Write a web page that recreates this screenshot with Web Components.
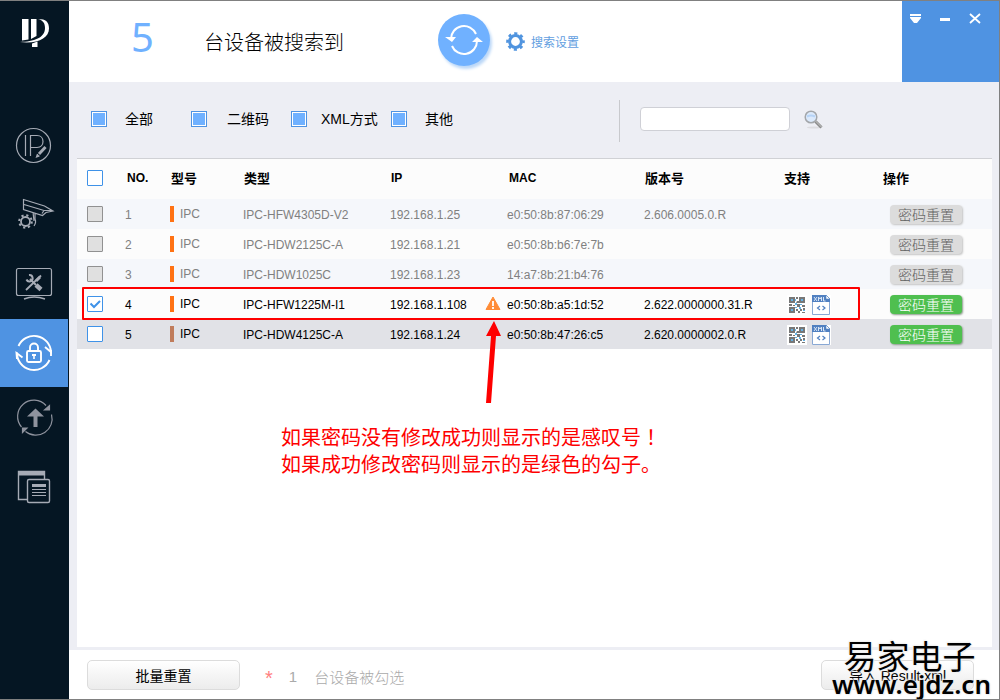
<!DOCTYPE html>
<html lang="zh-CN">
<head>
<meta charset="utf-8">
<meta name="viewport" content="width=device-width, initial-scale=1">
<title>ConfigTool</title>
<style>
  html, body { margin: 0; }
  body { font-family: "Liberation Sans", "Noto Sans CJK SC", sans-serif; font-size: 12px; color: #000; }
</style>
</head>
<body>
<config-tool></config-tool>

<script>
const define = (name, html, setup) => {
  const tpl = document.createElement('template');
  tpl.innerHTML = '<style>:host,*{box-sizing:border-box}:host([hidden]){display:none}</style>' + html;
  customElements.define(name, class extends HTMLElement {
    constructor() {
      super();
      this.attachShadow({ mode: 'open' });
    }
    connectedCallback() {
      if (this.shadowRoot.childNodes.length) return;
      this.shadowRoot.append(tpl.content.cloneNode(true));
      if (setup) setup(this, this.shadowRoot);
    }
  });
};

/* ---------- sidebar ---------- */
define('nav-item', `
<style>
  :host { display: block; margin-right: 1px; }
  a { display: block; height: 68px; color: #a6abb5; }
  :host([active]) a { background: #4f93e2; color: #fff; }
</style>
<a href="#"><slot></slot></a>`,
(host, root) => root.querySelector('a').setAttribute('aria-label', host.getAttribute('label')));

define('side-bar', `
<style>
  :host { display: block; background: #051623; }
  .logo { display: block; height: 114px; }
  svg { display: block; width: 68px; height: 68px; fill: none; stroke: currentColor; stroke-width: 1.2; }
</style>
<div class="logo">
  <svg viewBox="0 0 68 68" style="color:#fff">
    <g fill="#fff" stroke="none">
      <path d="M22 18h6.500v20.500l-6.500 1zM31 18h5.500v17l-5.500 3zM32 42.500l5.500-2V46H32z"/>
      <path d="M38 18c8 0 11 3 11 9.500C49 37 38 43 20 41c14-.5 25-4 25-14 0-5-2-7.500-7-9z"/>
    </g>
  </svg>
</div>
<nav>
  <nav-item label="修改IP"><svg viewBox="0 0 68 68">
    <circle cx="33.500" cy="30.500" r="17"/>
    <path d="M25.500 20v21M30.500 41V20.500h6.500c8 0 8 12 0 12h-6.500"/>
    <path d="M45.500 32l-6.500 7" stroke-width="3"/><path d="M37.500 39l-1 3 3-1" fill="currentColor"/>
  </svg></nav-item>
  <nav-item label="系统设置"><svg viewBox="0 0 68 68">
    <path d="M23.500 16.500l21 6.500 8.500 5-7 1.500-3.500 3-19-6zM24 21.500l20 6 8.500 0M44 27.500l-2 3M33 29l1 9M35 30v6c1 2 1 4-1 7"/>
    <circle cx="25.500" cy="38.500" r="4.500" stroke-width="1.800"/>
    <circle cx="25.500" cy="38.500" r="6.300" stroke-width="2" stroke-dasharray="2.200 2.750"/>
  </svg></nav-item>
  <nav-item label="系统维护"><svg viewBox="0 0 68 68">
    <rect x="16.500" y="17.500" width="35" height="27" rx="2"/>
    <path d="M24 48q10-4 21 0" stroke-width="1.500"/>
    <path d="M26 39L41 24.500" stroke-width="1.800"/>
    <path d="M36 34l5 4.500" stroke-width="4.500"/><path d="M30 28l6 6" stroke-width="2"/>
    <path d="M29 24a3.200 3.200 0 1 1-2.500 4.500" stroke-width="2"/><path d="M36 30l4-4" stroke-width="3"/>
  </svg></nav-item>
  <nav-item label="密码重置" active><svg viewBox="0 0 68 68">
    <g stroke-width="1.900"><path d="M18.500 27A17 17 0 0 1 51 33l-6-5M17 40l-.5-6 6 4.500"/>
    <path d="M17 33.500A17 17 0 0 0 49.500 41M51 31v6"/>
    <rect x="27" y="32" width="14" height="11" rx="1.500"/><path d="M30 32v-3.500a4 4 0 0 1 8 0V32"/></g>
    <path d="M32 35h4v2h-1.200v3h-1.600v-3H32z" fill="#fff" stroke="none"/>
  </svg></nav-item>
  <nav-item label="设备升级"><svg viewBox="0 0 68 68" style="color:#8f939e">
    <path d="M46 18.500A16.300 16.300 0 0 0 21.500 40M51.500 27.500a16.300 16.300 0 0 1-26 17"/>
    <path d="M49.500 18.500v4.500h-5zM22.500 45.500V41h4.500z" fill="currentColor"/>
    <path d="M35.500 21.500l8.500 8h-6.500V40h-4V29.500H27z" fill="currentColor" stroke="none"/>
  </svg></nav-item>
  <nav-item label="文档"><svg viewBox="0 0 68 68">
    <path d="M27 44.500h-8.500v-28h26V24" stroke-width="1.400"/><path d="M18 16h27v4.500H18z" fill="currentColor" stroke="none"/>
    <rect x="27.500" y="24.500" width="22" height="23" rx="1.500" stroke-width="1.400"/>
    <path d="M32 30.500h14" stroke-width="3"/><path d="M32 34.500h14M32 37.500h14M32 40.500h14" />
  </svg></nav-item>
</nav>`);

/* ---------- header ---------- */
define('top-bar', `
<style>
  :host { display: flex; align-items: center; height: 81px; background: #fff; }
  .count { width: 70px; height: 81px; margin-left: 62px; font: 40px/72px "Noto Sans", sans-serif; color: #70b1ff; }
  h1 { flex: 1 1 228px; max-width: 228px; margin: 2px 0 0 3px; font-size: 20px; line-height: 30px; font-weight: 300; white-space: nowrap; }
  button { padding: 0; border: 0; background: none; color: inherit; font: inherit; cursor: pointer; }
  .refresh { width: 52px; height: 52px; margin: 0 16px 3px 6px; border-radius: 50%; background: #70b1ff; box-shadow: 2px 3px 3px #bcd8f8; }
  .settings { display: flex; align-items: center; gap: 6px; color: #629edf; white-space: nowrap; }
  svg { display: block; }
  .window { display: flex; align-items: flex-start; gap: 9px; width: 97px; height: 81px; margin-left: auto; padding: 8px 3px; background: #4f93e2; }
  .window button { width: 21px; height: 20px; color: #fff; }
</style>
<div class="count">5</div>
<h1>台设备被搜索到</h1>
<button class="refresh" aria-label="刷新"><svg width="52" height="52" viewBox="0 0 52 52" fill="none" stroke="#fff" stroke-width="2">
  <path d="M38 20A13 13 0 0 0 13 25M14 32A13 13 0 0 0 39 27"/>
  <path d="M7 23h11l-4 5zM34 28h11l-6-5z" fill="#fff" stroke="none"/></svg></button>
<button class="settings"><svg width="19" height="19" viewBox="0 0 19 19" fill="none" stroke="#5094df">
  <circle cx="9.500" cy="9.500" r="5.900" stroke-width="3"/><circle cx="9.500" cy="9.500" r="8" stroke-width="2.600" stroke-dasharray="3.100 3.180" stroke-dashoffset="1.500"/></svg>搜索设置</button>
<div class="window">
  <button aria-label="菜单"><svg width="21" height="20" fill="#fff"><path d="M5 5h11v2H5zM5 8h11v1l-4 5H9L5 9z"/></svg></button>
  <button aria-label="最小化"><svg width="21" height="20" fill="#fff"><path d="M5 9h10v3H5z"/></svg></button>
  <button aria-label="关闭"><svg width="21" height="20" stroke="#fff" stroke-width="1.800"><path d="M5 5l10 9M15 5L5 14"/></svg></button>
</div>`);

/* ---------- filters ---------- */
define('filter-box', `
<style>
  :host { display: block; width: 100px; font-size: 14px; }
  label { display: flex; align-items: center; gap: var(--gap, 18px); line-height: 20px; white-space: nowrap; }
  input { appearance: none; flex: none; width: 16px; height: 16px; margin: 0; border: 1px solid #4f93e2; background: #fff; }
  input:checked { padding: 1px; background: #70b1ff content-box; box-shadow: inset 0 0 0 1px #fff; }
</style>
<label><input type="checkbox" checked><slot></slot></label>`);

define('filter-bar', `
<style>
  :host { display: flex; align-items: center; height: 76px; padding-left: 22px; }
  filter-box { margin-bottom: 2px; }
  .line { width: 1px; height: 42px; margin: 2px 20px 0 128px; background: #c8c9cd; }
  input { width: 150px; height: 24px; margin-bottom: 2px; padding: 0 6px; border: 1px solid #cfd0d6; border-radius: 4px; background: #fff; font: inherit; }
  button { margin-left: 14px; padding: 0; border: 0; background: none; }
  svg { display: block; }
</style>
<filter-box style="--gap:18px">全部</filter-box>
<filter-box style="--gap:20px">二维码</filter-box>
<filter-box style="--gap:14px">XML方式</filter-box>
<filter-box style="--gap:18px">其他</filter-box>
<div class="line"></div>
<input type="search" aria-label="搜索">
<button aria-label="搜索"><svg width="20" height="20" viewBox="0 0 20 20" fill="none">
  <ellipse cx="10" cy="17.500" rx="7" ry="1" fill="#dcdce0"/>
  <path d="M11.500 11.500l6 6" stroke="#8c8c8c" stroke-width="3"/><path d="M11.500 11l6 6" stroke="#c9c9c9"/>
  <circle cx="7" cy="7" r="5.800" fill="#dbe9fb" stroke="#a3a6aa" stroke-width="1.500"/>
  <path d="M3 6.500q4-2 8 0" stroke="#b6d3f6" stroke-width="2"/></svg></button>`);

/* ---------- small icons ---------- */
define('warn-icon', `
<style>:host { display: block; width: 16px; height: 15px; } svg { display: block; }</style>
<svg width="16" height="15" viewBox="0 0 16 15"><path d="M8 1L15 13.500H1z" fill="#ff8c37" stroke="#ff8c37" stroke-linejoin="round"/><path d="M8 5v5M8 11v2" stroke="#fff" stroke-width="1.800"/></svg>`);

define('qr-icon', `
<style>:host { display: block; width: 20px; height: 20px; background: #fff; } svg { display: block; }</style>
<svg width="20" height="20" viewBox="0 0 20 20"><g fill="none" stroke="#777" stroke-width="2"><path d="M3 3h4v4H3zM13 3h4v4h-4zM3 13h4v4H3z"/></g>
<path d="M9 2h2v2H9zM10 6h2v2H9zM2 9h3v2H2zM6 10h2v1H6zM10 9h3v3h-3zM15 10h3v2h-3zM9 14h2v2H9zM13 14h2v2h-2zM16 13h2v2h-2zM11 16h2v2h-2zM15 17h3v1h-3z" fill="#777"/>
<path d="M4 4h2v2H4zM8 4h1v2H8zM14 4h2v2h-2zM4 14h2v2H4zM8 8h2v2H8zM13 9h2v1h-2zM8 12h2v1H8zM12 12h2v2h-2zM16 15h2v1h-2z" fill="#63b4e8"/></svg>`);

define('xml-icon', `
<style>:host { display: block; width: 19px; height: 20px; background: #fff; } svg { display: block; }</style>
<svg width="19" height="20" viewBox="0 0 19 20"><path d="M.5.5h14l3 3v16H.5z" fill="#fff" stroke="#89a8d4"/><path d="M0 0h14l4 4v3H0z" fill="#5080c1"/><path d="M14 0l4 4h-4z" fill="#fff" stroke="#5080c1" stroke-width=".6"/>
<path d="M2 2l3 4M5 2L2 6M6.500 6V2l1.500 2 1.500-2v4M11.500 2v4h2" stroke="#d9e5f5" fill="none"/><path d="M8 11l-2.500 2L8 15M10.500 11l2.500 2-2.500 2" stroke="#5080c1" fill="none" stroke-width="1.200"/></svg>`);

/* ---------- device table ---------- */
const devices = [
  ['IPC-HFW4305D-V2', '192.168.1.25', 'e0:50:8b:87:06:29', '2.606.0005.0.R', 'off'],
  ['IPC-HDW2125C-A', '192.168.1.21', 'e0:50:8b:b6:7e:7b', '', 'off'],
  ['IPC-HDW1025C', '192.168.1.23', '14:a7:8b:21:b4:76', '', 'off'],
  ['IPC-HFW1225M-I1', '192.168.1.108', 'e0:50:8b:a5:1d:52', '2.622.0000000.31.R', 'checked'],
  ['IPC-HDW4125C-A', '192.168.1.24', 'e0:50:8b:47:26:c5', '2.620.0000002.0.R', 'hover']
];

define('device-table', `
<style>
  :host { display: block; }
  table { width: 100%; border-collapse: collapse; table-layout: fixed; border-top: 1px solid #d0d1d5; }
  th, td { padding: 0 0 0 8px; text-align: left; white-space: nowrap; }
  th { height: 40px; padding: 0 0 2px 9px; font-size: 13px; background: #fcfcfc; }
  th.latin { font-size: 12px; }
  th.no { padding-left: 10px; }
  th.mac { padding-left: 32px; }
  td { height: 30px; padding-top: 2px; }
  tr.off { color: #808080; }
  tbody tr { background: #fcfcfc; }
  tbody tr:nth-child(odd) { background: #f5f7fb; }
  tbody tr.hover { background: #e1e2e7; }
  th.pick, td.pick { padding-left: 10px; }
  td.pick, td.kind-cell { padding-top: 0; }
  input { appearance: none; display: block; width: 16px; height: 16px; margin: 0; border: 1px solid #3f92e8; border-radius: 1px; background: #fff; }
  input:disabled { border-color: #919191; background: #e0e0e0; }
  svg.tick { position: absolute; inset: 0; pointer-events: none; }
  .box { position: relative; width: 16px; }
  .kind { display: flex; align-items: center; gap: 6px; line-height: 18px; }
  .kind::before { content: ""; width: 4px; height: 16px; background: #ff7214; }
  .hover .kind::before { background: #c07c5c; }
  div.mac { display: flex; align-items: center; }
  .slot { width: 22px; height: 15px; }
  warn-icon { margin-top: -1px; }
  .support { display: flex; gap: 5px; padding-left: 4px; }
  td.op { padding-left: 16px; }
  button { display: block; width: 72px; height: 19px; padding: 0; border: 0; border-radius: 4px; background: #4fbf4f; color: #fff; font: 300 14px/19px "Noto Sans CJK SC", sans-serif; box-shadow: 1px 1px 2px #8a9a8a; }
  button:disabled { background: #dcdcdc; color: #606060; box-shadow: 1px 1px 2px #c4c4c4; }
</style>
<table>
  <colgroup><col style="width:40px"><col style="width:45px"><col style="width:73px"><col style="width:147px"><col style="width:95px"><col style="width:159px"><col style="width:139px"><col style="width:99px"><col style="width:118px"></colgroup>
  <thead><tr><th class="pick"><input type="checkbox" aria-label="全选"></th><th class="latin no">NO.</th><th>型号</th><th>类型</th><th class="latin">IP</th><th class="latin mac">MAC</th><th>版本号</th><th>支持</th><th>操作</th></tr></thead>
  <tbody></tbody>
</table>`,
(host, root) => {
  root.querySelector('tbody').innerHTML = devices.map(([type, ip, mac, version, state], i) => {
    const off = state === 'off' ? 'disabled' : '';
    const checked = state === 'checked';
    return `<tr class="${state}">
      <td class="pick"><div class="box"><input type="checkbox" aria-label="选择 ${i + 1}" ${off} ${checked ? 'checked' : ''}>
      ${checked ? '<svg class="tick" width="16" height="16" fill="none" stroke="#3f92e8" stroke-width="2"><path d="M3.500 7.500l3.500 3.500 6-6"/></svg>' : ''}</div></td>
      <td>${i + 1}</td><td class="kind-cell"><div class="kind">IPC</div></td><td>${type}</td><td>${ip}</td>
      <td><div class="mac"><span class="slot">${checked ? '<warn-icon></warn-icon>' : ''}</span>${mac}</div></td>
      <td>${version}</td>
      <td>${off ? '' : '<div class="support"><qr-icon></qr-icon><xml-icon></xml-icon></div>'}</td>
      <td class="op"><button ${off}>密码重置</button></td></tr>`;
  }).join('');
});

/* ---------- annotation laid over the table ---------- */
define('red-note', `
<style>
  :host { position: absolute; left: 5px; right: 132px; top: 129px; color: #fe0000; pointer-events: none; }
  .frame { height: 33px; border: 2px solid #fe0000; border-radius: 1px; }
  svg { display: block; margin: 1px 0 0 398px; }
  p { margin: 20px 0 0 199px; font: 20px/27px "Noto Sans CJK SC", sans-serif; white-space: nowrap; }
  .mark { font-family: "Noto Sans CJK TC"; }
</style>
<div class="frame"></div>
<svg width="24" height="82" viewBox="0 0 24 82" fill="#fe0000"><path d="M14 0l7 15h-5L11 82H6l5-67H6z"/></svg>
<p>如果密码没有修改成功则显示的是感叹号<span class="mark" lang="zh-TW">！</span><br>如果成功修改密码则显示的是绿色的勾子。</p>`);

/* ---------- footer ---------- */
define('plain-button', `
<style>
  :host { display: block; }
  button { display: block; width: 153px; height: 30px; padding: 0; border: 1px solid #dcdcdc; border-radius: 5px; background: linear-gradient(#fff, #ececec); color: #000; font: 14px "Liberation Sans", "Noto Sans CJK SC", sans-serif; }
</style>
<button><slot></slot></button>`);

define('bottom-bar', `
<style>
  :host { display: flex; align-items: center; position: relative; height: 49px; padding: 0 25px 0 18px; background: #fff; color: #aaa; font-size: 15px; }
  .star { margin: 7px 16px 0 25px; color: #ff8080; font-size: 20px; line-height: 20px; }
  .text { margin: 3px 0 0 17px; font-weight: 300; }
  .num { margin-top: 3px; }
  plain-button:last-of-type { margin-left: auto; }
  .brand { position: absolute; right: 8px; bottom: 0; color: #000; text-align: center; white-space: nowrap;
    text-shadow: 0 0 2px #eee, 0 0 2px #eee, 1px 1px 2px #eee, -1px -1px 2px #eee; }
  .name { height: 32px; padding-right: 4px; font: 33px/34px "Noto Sans CJK SC", sans-serif; }
  .site { font: 600 26px/29px "Noto Sans", sans-serif; }
</style>
<plain-button>批量重置</plain-button>
<span class="star">*</span><span class="num">1</span><span class="text">台设备被勾选</span>
<plain-button>导入 Result.xml</plain-button>
<div class="brand"><div class="name">易家电子</div><div class="site">www.ejdz.cn</div></div>`);

/* ---------- page ---------- */
define('config-tool', `
<style>
  :host { display: grid; grid-template-columns: 69px minmax(0, 1fr); min-height: 100vh; border: solid #808080; border-width: 1px 1px 1px 0; overflow: hidden; }
  main { display: flex; flex-direction: column; }
  .body { flex: 1; display: flex; flex-direction: column; padding: 0 7px 3px 8px; background: #edeef4; }
  filter-bar { margin-left: -8px; }
  .card { flex: 1; position: relative; background: #fff; }
</style>
<side-bar></side-bar>
<main>
  <top-bar></top-bar>
  <div class="body">
    <filter-bar></filter-bar>
    <div class="card"><device-table></device-table><red-note></red-note></div>
  </div>
  <bottom-bar></bottom-bar>
</main>`);
</script>
</body>
</html>
